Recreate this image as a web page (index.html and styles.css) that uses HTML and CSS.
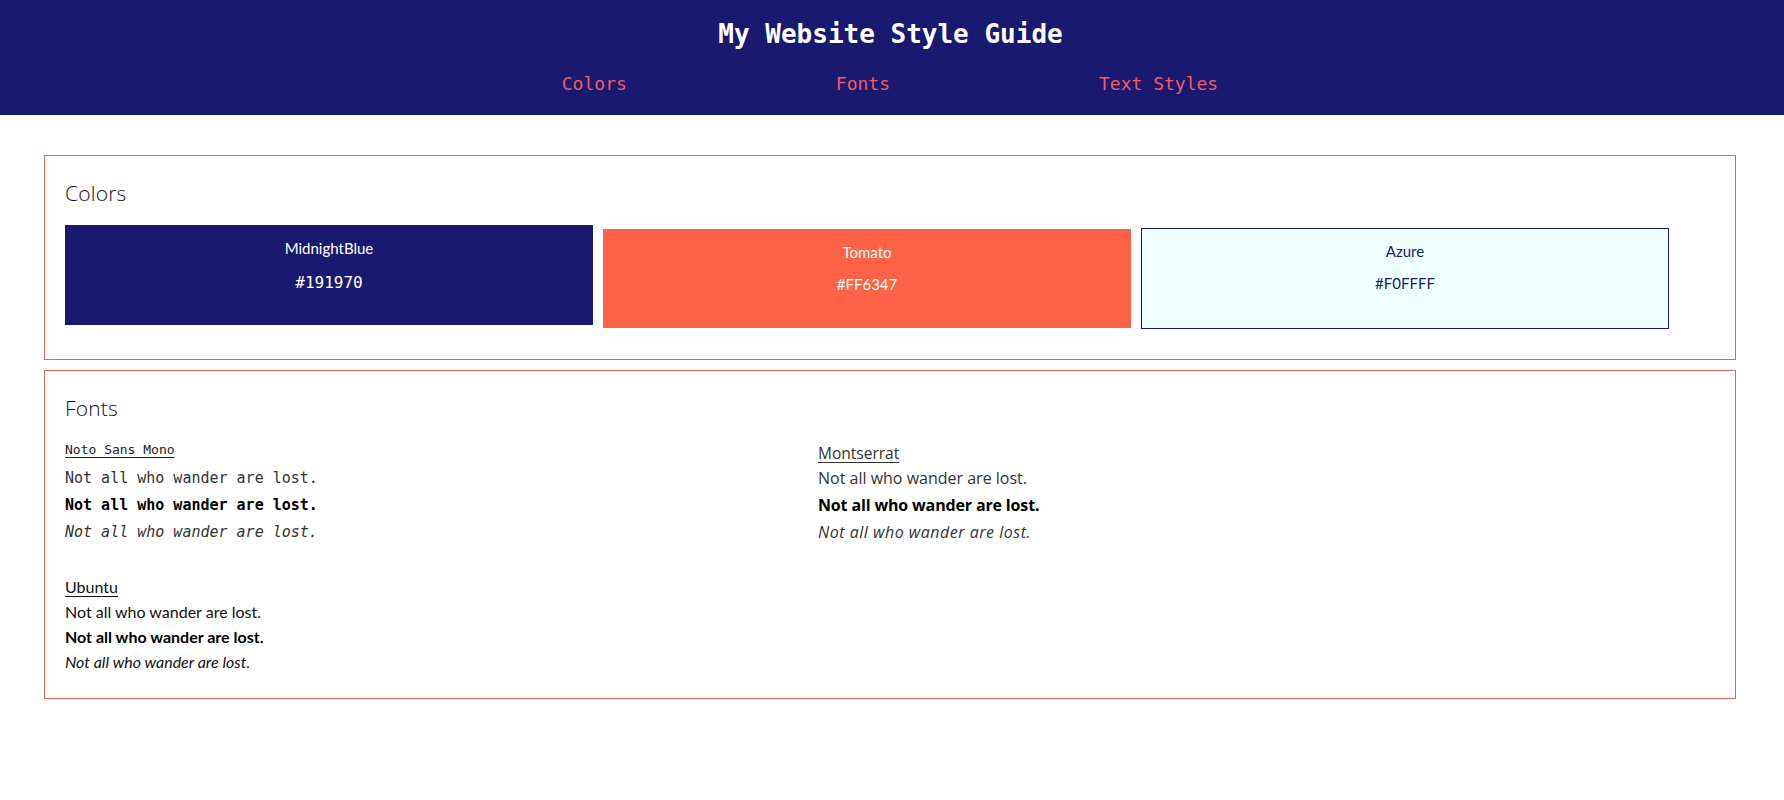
FILE: index.html
```html
<!DOCTYPE html>
<html lang="en">
<head>
<meta charset="utf-8">
<title>My Website Style Guide</title>
<link rel="stylesheet" href="styles.css">
</head>
<body>
<header class="site-header">
  <h1 class="site-title">My Website Style Guide</h1>
  <nav class="site-nav">
    <a href="#colors">Colors</a>
    <a href="#fonts">Fonts</a>
    <a href="#text-styles">Text Styles</a>
  </nav>
</header>
<main class="content">
  <section class="panel" id="colors">
    <h2 class="panel-title">Colors</h2>
    <div class="swatches">
      <div class="swatch swatch-midnight">
        <div class="swatch-name">MidnightBlue</div>
        <div class="swatch-hex swatch-hex-mono">#191970</div>
      </div>
      <div class="swatch swatch-tomato">
        <div class="swatch-name">Tomato</div>
        <div class="swatch-hex">#FF6347</div>
      </div>
      <div class="swatch swatch-azure">
        <div class="swatch-name">Azure</div>
        <div class="swatch-hex">#F0FFFF</div>
      </div>
    </div>
  </section>
  <section class="panel panel-fonts" id="fonts">
    <h2 class="panel-title">Fonts</h2>
    <div class="font-grid">
      <div class="font-sample font-mono">
        <div class="font-label">Noto Sans Mono</div>
        <p class="sample">Not all who wander are lost.</p>
        <p class="sample sample-bold">Not all who wander are lost.</p>
        <p class="sample sample-italic">Not all who wander are lost.</p>
      </div>
      <div class="font-sample font-mont">
        <div class="font-label">Montserrat</div>
        <p class="sample">Not all who wander are lost.</p>
        <p class="sample sample-bold">Not all who wander are lost.</p>
        <p class="sample sample-italic">Not all who wander are lost.</p>
      </div>
      <div class="font-sample font-ubuntu">
        <div class="font-label">Ubuntu</div>
        <p class="sample">Not all who wander are lost.</p>
        <p class="sample sample-bold">Not all who wander are lost.</p>
        <p class="sample sample-italic">Not all who wander are lost.</p>
      </div>
    </div>
  </section>
</main>
</body>
</html>
```

FILE: styles.css
```css
* { box-sizing: border-box; }

body {
  margin: 0;
  background: #ffffff;
  color: #222222;
  font-family: "Lato", "Liberation Sans", sans-serif;
}

.site-header {
  background: #191970;
  height: 115px;
  padding-top: 18px;
  text-align: center;
}

.site-title {
  margin: 0;
  padding-right: 3px;
  font-family: "DejaVu Sans Mono", "Liberation Mono", monospace;
  font-weight: bold;
  font-size: 26px;
  line-height: 32px;
  color: #ffffff;
}

.site-nav {
  display: flex;
  justify-content: center;
  gap: 209px;
  margin-top: 23px;
  padding-right: 4px;
}

.site-nav a {
  font-family: "DejaVu Sans Mono", "Liberation Mono", monospace;
  font-size: 18px;
  line-height: 22px;
  color: #f25c62;
  text-decoration: none;
}

.content {
  padding: 40px 48px 0 44px;
  display: flex;
  flex-direction: column;
  gap: 10px;
}

.panel {
  border: 1px solid #dd6655;
  padding: 25px 20px 24px;
}

.panel-title {
  margin: 0 0 20px;
  font-family: "Open Sans", "Liberation Sans", sans-serif;
  font-weight: 300;
  font-size: 21px;
  line-height: 24px;
  letter-spacing: 0.2px;
  color: #111111;
}

.swatches {
  display: flex;
  align-items: flex-start;
  gap: 10px;
  margin-bottom: 6px;
}

.swatch {
  flex: 0 0 528px;
  height: 100px;
  padding-top: 14px;
  text-align: center;
  font-family: "Lato", "Liberation Sans", sans-serif;
  font-size: 15px;
  line-height: 18px;
}

.swatch-name { margin-bottom: 14px; }

.swatch-midnight {
  background: #191970;
  color: #ffffff;
}

.swatch-midnight .swatch-name { margin-bottom: 17px; }

.swatch-tomato {
  background: #ff6347;
  color: #ffffff;
  margin-top: 4px;
  height: 99px;
}

.swatch-azure {
  background: #f0ffff;
  color: #191970;
  border: 1px solid #191970;
  margin-top: 3px;
  height: 101px;
  padding-top: 13px;
}

.swatch-hex-mono {
  font-family: "DejaVu Sans Mono", "Liberation Mono", monospace;
  font-size: 16px;
}

.font-grid {
  display: grid;
  grid-template-columns: 753px 1fr;
  row-gap: 28px;
  margin-top: 19px;
}

.font-label {
  text-decoration: underline;
  text-underline-offset: 3px;
}

.sample { margin: 0; }

.sample-bold { font-weight: bold; color: #000000; }

.sample-italic { font-style: italic; }

.font-mono {
  font-family: "DejaVu Sans Mono", "Liberation Mono", monospace;
  font-size: 15px;
  line-height: 27px;
  color: #333333;
}

.font-mono .font-label {
  font-size: 13px;
  line-height: 20px;
  margin-bottom: 5px;
  color: #222222;
}

.font-mont {
  font-family: "Open Sans", "Liberation Sans", sans-serif;
  font-size: 16px;
  line-height: 27px;
  color: #333333;
  padding-top: 3px;
}

.font-mont .sample-bold { letter-spacing: -0.15px; }

.font-mont .sample-italic { letter-spacing: 0.5px; }

.font-mont .font-label {
  font-size: 15.5px;
  line-height: 20px;
  margin-bottom: 2px;
}

.font-ubuntu {
  font-family: "Lato", "Liberation Sans", sans-serif;
  font-size: 16px;
  line-height: 25px;
  color: #111111;
}
```
